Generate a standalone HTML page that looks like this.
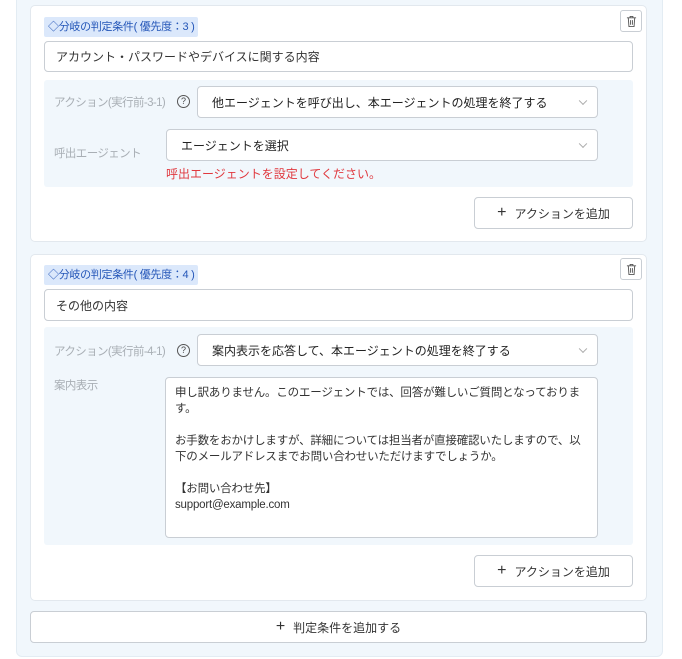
<!DOCTYPE html>
<html><head><meta charset="utf-8"><style>
*{box-sizing:border-box;margin:0;padding:0}
body{width:682px;height:659px;background:#fff;font-family:"Liberation Sans","Noto Sans CJK JP",sans-serif;font-size:12px;color:#333;position:relative;overflow:hidden}
.abs{position:absolute}
.panel{left:16px;top:-6px;width:647px;height:663px;background:#f1f7fc;border:1px solid #e3ecf3;border-radius:6px}
.card{background:#fff;border:1px solid #e2e8ee;border-radius:5px}
.badge{background:#dbe8fb;color:#2456b8;font-size:11px;padding:0 4px;height:20px;line-height:20px;border-radius:2px;letter-spacing:-0.3px}
.inp{background:#fff;border:1px solid #c9ced4;border-radius:4px;padding-left:11px;display:flex;align-items:center;font-size:12px;color:#333}
.area{background:#f1f7fc;border-radius:3px}
.lbl{color:#a9afb5;font-size:11.5px;letter-spacing:-0.6px;white-space:nowrap}
.sel{background:#fff;border:1px solid #c9ced4;border-radius:4px;padding-left:14px;display:flex;align-items:center;font-size:12px;color:#222}
.chev{position:absolute;right:11px;top:50%;width:6px;height:6px;border-right:1px solid #aaa;border-bottom:1px solid #aaa;transform:translateY(-70%) rotate(45deg)}
.btn{background:#fff;border:1px solid #c9ced4;border-radius:4px;display:flex;align-items:center;justify-content:center;font-size:12px;color:#333}
.trash{width:22px;height:22px;border:1px solid #c9ced4;border-radius:3px;background:#fff;display:flex;align-items:center;justify-content:center}
.q{width:13px;height:13px;border:1px solid #555;border-radius:50%;font-size:9px;line-height:11px;text-align:center;color:#444}
</style></head><body>
<div class="abs panel"></div>
<svg width="0" height="0" style="position:absolute"><defs><symbol id="tr" viewBox="0 0 12 14"><path d="M1 3h10M4.5 3V1.5h3V3M2.5 3l.7 9.5h5.6L9.5 3M5 5.5v5M7 5.5v5" fill="none" stroke="#555" stroke-width="1"/></symbol></defs></svg>

<div class="abs card" style="left:30px;top:5px;width:617px;height:237px"></div>
<div class="abs badge" style="left:44px;top:17px">◇分岐の判定条件( 優先度：3 )</div>
<div class="abs trash" style="left:620px;top:10px"><svg width="11" height="13"><use href="#tr"/></svg></div>
<div class="abs inp" style="left:44px;top:41px;width:589px;height:31px">アカウント・パスワードやデバイスに関する内容</div>
<div class="abs area" style="left:44px;top:80px;width:589px;height:107px"></div>
<div class="abs lbl" style="left:54px;top:94px">アクション(実行前-3-1)</div>
<div class="abs q" style="left:177px;top:95px">?</div>
<div class="abs sel" style="left:197px;top:86px;width:401px;height:32px">他エージェントを呼び出し、本エージェントの処理を終了する<span class="chev"></span></div>
<div class="abs lbl" style="left:54px;top:145px">呼出エージェント</div>
<div class="abs sel" style="left:166px;top:129px;width:432px;height:32px">エージェントを選択<span class="chev"></span></div>
<div class="abs" style="left:166px;top:165px;color:#e0383e;font-size:12px">呼出エージェントを設定してください。</div>
<div class="abs btn" style="left:474px;top:197px;width:159px;height:32px"><span style="font-size:16px;margin-right:8px">+</span>アクションを追加</div>

<div class="abs card" style="left:30px;top:254px;width:617px;height:347px"></div>
<div class="abs badge" style="left:44px;top:265px">◇分岐の判定条件( 優先度：4 )</div>
<div class="abs trash" style="left:620px;top:258px"><svg width="11" height="13"><use href="#tr"/></svg></div>
<div class="abs inp" style="left:44px;top:289px;width:589px;height:32px">その他の内容</div>
<div class="abs area" style="left:44px;top:327px;width:589px;height:218px"></div>
<div class="abs lbl" style="left:54px;top:343px">アクション(実行前-4-1)</div>
<div class="abs q" style="left:177px;top:344px">?</div>
<div class="abs sel" style="left:197px;top:334px;width:401px;height:32px">案内表示を応答して、本エージェントの処理を終了する<span class="chev"></span></div>
<div class="abs lbl" style="left:54px;top:377px">案内表示</div>
<div class="abs" style="left:165px;top:377px;width:433px;height:161px;background:#fff;border:1px solid #c9ced4;border-radius:4px;padding:7px 6px 5px 9px;font-size:11.5px;letter-spacing:-0.2px;line-height:16px;color:#333">申し訳ありません。このエージェントでは、回答が難しいご質問となっておりま<br>す。<br><br>お手数をおかけしますが、詳細については担当者が直接確認いたしますので、以<br>下のメールアドレスまでお問い合わせいただけますでしょうか。<br><br>【お問い合わせ先】<br>support@example.com</div>
<div class="abs btn" style="left:474px;top:555px;width:159px;height:32px"><span style="font-size:16px;margin-right:8px">+</span>アクションを追加</div>

<div class="abs btn" style="left:30px;top:611px;width:617px;height:32px"><span style="font-size:16px;margin-right:8px">+</span>判定条件を追加する</div>
</body></html>
